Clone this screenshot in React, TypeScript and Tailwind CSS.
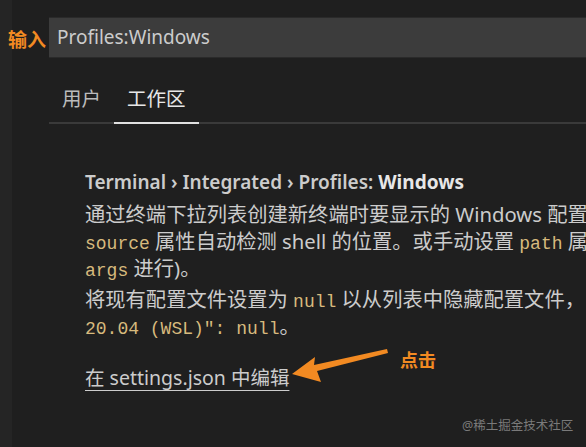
const ui = { fontFamily: '"Noto Sans", "Noto Sans CJK SC", sans-serif' };
const mono = { fontFamily: '"Liberation Mono", "Noto Sans CJK SC", monospace' };

function Code({ children }: { children: React.ReactNode }) {
  return (
    <span className="text-[18px] leading-none text-[#d7ba7d]" style={mono}>
      {children}
    </span>
  );
}

export default function App() {
  return (
    <div
      className="relative flex w-[586px] h-[447px] overflow-hidden bg-[#1f1f1f] text-[#cccccc]"
      style={ui}
    >
      {/* left strip */}
      <div className="w-[12px] shrink-0 bg-[#252525]" />

      <div className="flex flex-col flex-1 min-w-0">
        {/* search box */}
        <div className="mt-[17px] ml-[37px] h-[41px] flex items-center bg-[#3c3c3c] border-y border-[#2a2a2a] pl-[8px]">
          <span className="text-[19px] text-[#cccccc]">Profiles:Windows</span>
        </div>

        {/* tabs */}
        <div className="ml-[37px] mt-[27px] flex border-b-2 border-[#3a3a3a]">
          <div className="px-[13px] pb-[10px] text-[19.5px] leading-[27px] text-[#bbbbbb]">用户</div>
          <div className="px-[13px] pb-[10px] text-[19.5px] leading-[27px] text-[#e7e7e7] border-b-2 border-[#e0e0e0] -mb-[2px]">
            工作区
          </div>
        </div>

        {/* setting */}
        <div className="ml-[73px] mt-[45px] text-[20.3px] leading-[27px] whitespace-nowrap">
          <div className="font-semibold text-[19px] text-[#cccccc]">
            Terminal › Integrated › Profiles: <span className="font-bold text-[#e7e7e7]">Windows</span>
          </div>
          <div className="mt-[5px]">
            <div>通过终端下拉列表创建新终端时要显示的 Windows 配置文件。设置</div>
            <div>
              <Code>source</Code> 属性自动检测 shell 的位置。或手动设置 <Code>path</Code> 属性，可选择使用
            </div>
            <div>
              <Code>args</Code> 进行)。
            </div>
          </div>
          <div className="mt-[4px]">
            <div>
              将现有配置文件设置为 <Code>null</Code> 以从列表中隐藏配置文件，
              <span className="ml-[12px]">例如: </span>
              <Code>"Ubuntu-</Code>
            </div>
            <div>
              <Code>20.04 (WSL)": null</Code>。
            </div>
          </div>
          <div className="mt-[24px] text-[19.5px]">
            <span className="underline underline-offset-[5px] decoration-1 text-[#cccccc]">
              在 settings.json 中编辑
            </span>
          </div>
        </div>
      </div>

      {/* annotations */}
      <div className="absolute left-[8px] top-[26px] text-[19px] font-bold text-[#f28a22]" style={ui}>
        输入
      </div>
      <div className="absolute left-[400px] top-[347px] text-[18px] font-bold text-[#f28a22]" style={ui}>
        点击
      </div>
      <svg className="absolute inset-0 pointer-events-none" width="586" height="447">
        <polygon
          points="292,374 315,357 314,365 387,349 388,353 317,371 321,382"
          fill="#f28a22"
        />
      </svg>
      <div className="absolute left-[462px] top-[417px] text-[12.5px] text-[#7a7a7a]" style={ui}>
        @稀土掘金技术社区
      </div>
    </div>
  );
}
